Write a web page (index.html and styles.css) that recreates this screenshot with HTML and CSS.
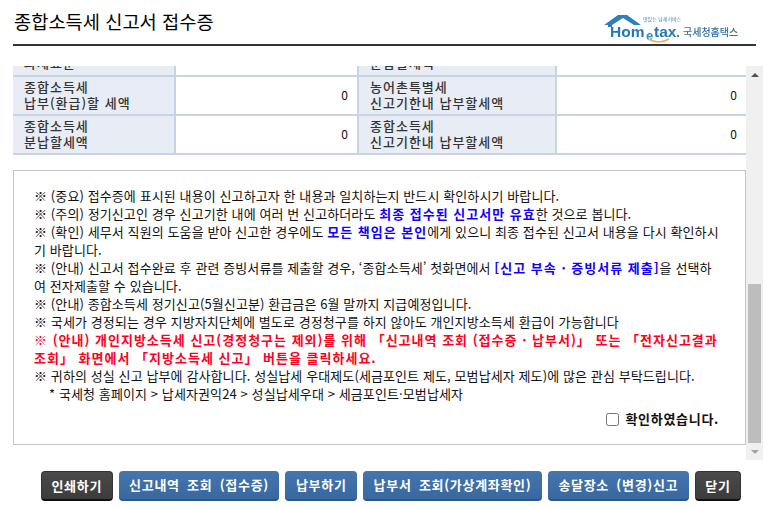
FILE: index.html
```html
<!DOCTYPE html>
<html lang="ko">
  <head>
    <meta charset="utf-8">
    <title>종합소득세 신고서 접수증</title>
    <link rel="stylesheet" href="styles.css">
  </head>
  <body>
    <div class="header">
      <h1 class="title">종합소득세 신고서 접수증</h1>
      <svg class="logo" width="142" height="32" viewBox="0 0 142 32">
        <path d="M1 13 L15 3 H24 L38 13 H31 L20 6 L9 13 V15 H5 V13 Z" fill="#2f7fb8"/>
        <text x="40" y="9" class="logo-tiny">맛있는 납세서비스</text>
        <text x="7" y="25" class="logo-home">Hom</text>
        <text x="43" y="28" class="logo-e">e</text>
        <text x="51" y="25" class="logo-home">tax</text>
        <circle cx="75" cy="24" r="1.2" fill="#3a9a4a"/>
        <path d="M45 27 Q56 33 66 27" stroke="#eab05a" stroke-width="1.5" fill="none"/>
        <text x="80" y="24" class="logo-kr">국세청홈택스</text>
      </svg>
    </div>

    <div class="scroll-area">
      <div class="scroll-content">
        <table class="tax-table">
          <tr>
            <th>종합소득세<br>과세표준</th>
            <td></td>
            <th>종합소득세<br>분납할세액</th>
            <td></td>
          </tr>
          <tr>
            <th>종합소득세<br>납부(환급)할 세액</th>
            <td>0</td>
            <th>농어촌특별세<br>신고기한내 납부할세액</th>
            <td>0</td>
          </tr>
          <tr>
            <th>종합소득세<br>분납할세액</th>
            <td>0</td>
            <th>종합소득세<br>신고기한내 납부할세액</th>
            <td>0</td>
          </tr>
        </table>
        <div class="notice">
          <p>※ (중요) 접수증에 표시된 내용이 신고하고자 한 내용과 일치하는지 반드시 확인하시기 바랍니다.</p>
          <p>※ (주의) 정기신고인 경우 신고기한 내에 여러 번 신고하더라도 <b class="blue">최종 접수된 신고서만 유효</b>한 것으로 봅니다.</p>
          <p>※ (확인) 세무서 직원의 도움을 받아 신고한 경우에도 <b class="blue">모든 책임은 본인</b>에게 있으니 최종 접수된 신고서 내용을 다시 확인하시<br>기 바랍니다.</p>
          <p>※ (안내) 신고서 접수완료 후 관련 증빙서류를 제출할 경우, ‘종합소득세’ 첫화면에서 <b class="blue">[신고 부속 · 증빙서류 제출]</b>을 선택하<br>여 전자제출할 수 있습니다.</p>
          <p>※ (안내) 종합소득세 정기신고(5월신고분) 환급금은 6월 말까지 지급예정입니다.</p>
          <p>※ 국세가 경정되는 경우 지방자치단체에 별도로 경정청구를 하지 않아도 개인지방소득세 환급이 가능합니다</p>
          <p class="red">※ (안내) 개인지방소득세 신고(경정청구는 제외)를 위해 「신고내역 조회 (접수증 · 납부서)」 또는 「전자신고결과<br>조회」 화면에서 「지방소득세 신고」 버튼을 클릭하세요.</p>
          <p>※ 귀하의 성실 신고 납부에 감사합니다. 성실납세 우대제도(세금포인트 제도, 모범납세자 제도)에 많은 관심 부탁드립니다.</p>
          <p class="sub">* 국세청 홈페이지 &gt; 납세자권익24 &gt; 성실납세우대 &gt; 세금포인트·모범납세자</p>
          <label class="confirm"><input type="checkbox"> <b>확인하였습니다.</b></label>
        </div>
      </div>
      <div class="scrollbar">
        <span class="arrow arrow-up"></span>
        <span class="track"><span class="thumb"></span></span>
        <span class="arrow arrow-down"></span>
      </div>
    </div>

    <div class="buttons">
      <button class="btn btn-dark">인쇄하기</button>
      <button class="btn">신고내역 조회 (접수증)</button>
      <button class="btn">납부하기</button>
      <button class="btn">납부서 조회(가상계좌확인)</button>
      <button class="btn">송달장소 (변경)신고</button>
      <button class="btn btn-dark">닫기</button>
    </div>
  </body>
</html>
```

FILE: styles.css
```css
* {
  box-sizing: border-box;
}
body {
  margin: 0;
  padding: 0 8px 0 13px;
  font-family: "Noto Sans CJK KR", "Liberation Sans", sans-serif;
  font-size: 13px;
  color: #111;
  background: #fff;
}
.header {
  display: flex;
  justify-content: space-between;
  align-items: flex-end;
  height: 46px;
  width: 743px;
  padding: 0 11px 0 1px;
  border-bottom: 2px solid #333;
}
.title {
  margin: 0 0 11px;
  font-size: 18.7px;
  font-weight: 400;
  line-height: 24px;
  color: #000;
}
.logo {
  filter: blur(0.35px);
}
.logo-home {
  font-family: "Liberation Sans", sans-serif;
  font-size: 15.5px;
  font-weight: 700;
  fill: #2478b5;
}
.logo-e {
  font-family: "Liberation Sans", sans-serif;
  font-size: 13px;
  font-weight: 700;
  fill: #2f8fc8;
}
.logo-tiny {
  font-size: 5px;
  fill: #4a86b8;
}
.logo-kr {
  font-size: 10px;
  font-weight: 500;
  fill: #2a6fa8;
}

.scroll-area {
  display: flex;
  height: 394px;
  margin-top: 20px;
  overflow: hidden;
}
.scroll-content {
  width: 733px;
  display: flex;
  flex-direction: column;
  justify-content: flex-end;
  padding-bottom: 15px;
}

.tax-table {
  flex: none;
  width: 733px;
  border-collapse: collapse;
  table-layout: fixed;
  margin-bottom: 15px;
}
.tax-table th,
.tax-table td {
  height: 39px;
  border-bottom: 2px solid #c8d3e3;
  line-height: 16px;
  padding: 1px 9px 3px 11px;
  font-weight: 400;
}
.tax-table th {
  background: #e8ecf5;
  border-right: 2px solid #c8d3e3;
  text-align: left;
  color: #333;
  font-weight: 500;
  letter-spacing: 1px;
  white-space: nowrap;
}
.tax-table th:nth-child(1) {
  width: 162px;
}
.tax-table td:nth-child(2) {
  width: 183px;
  border-right: 2px solid #c8d3e3;
}
.tax-table th:nth-child(3) {
  width: 198px;
}
.tax-table td {
  text-align: right;
  font-size: 12px;
}

.notice {
  flex: none;
  height: 275px;
  width: 733px;
  border: 1px solid #c4c4c4;
  padding: 16px 0 0 20px;
  white-space: nowrap;
  letter-spacing: 0.1px;
}
.notice p {
  margin: 0;
  line-height: 18px;
}
.blue {
  color: #1400ff;
  letter-spacing: 1px;
}
.red {
  color: #ff0022;
  font-weight: 700;
  letter-spacing: 1px;
}
.sub {
  padding-left: 15px;
}
.confirm {
  display: flex;
  align-items: center;
  justify-content: flex-end;
  gap: 6px;
  margin-top: 7px;
  padding-right: 26px;
  line-height: 18px;
  letter-spacing: 0.7px;
}
.confirm input {
  margin: 0;
  width: 13px;
  height: 13px;
}

.scrollbar {
  display: flex;
  flex-direction: column;
  width: 17px;
  background: #f0f0f0;
}
.arrow {
  flex: none;
  height: 17px;
  display: flex;
  align-items: center;
  justify-content: center;
}
.arrow-up::before {
  content: "";
  border: 4px solid transparent;
  border-top: 0;
  border-bottom: 4px solid #505050;
}
.arrow-down::before {
  content: "";
  border: 4px solid transparent;
  border-bottom: 0;
  border-top: 4px solid #a3a3a3;
}
.track {
  flex: 1;
  display: flex;
  flex-direction: column;
  justify-content: flex-end;
}
.thumb {
  height: 159px;
  margin: 0 2px;
  background: #bdbdbd;
}

.buttons {
  display: flex;
  justify-content: center;
  gap: 6px;
  margin-top: 11px;
  padding-left: 6px;
}
.btn {
  height: 30px;
  padding: 0 10.5px 1px;
  border: 0;
  border-bottom: 2px solid #2b5688;
  border-radius: 4px;
  background: linear-gradient(#4475ac, #38689f);
  color: #fff;
  font-family: inherit;
  font-size: 13px;
  font-weight: 700;
  letter-spacing: 0.7px;
  word-spacing: 3px;
  white-space: nowrap;
}
.btn-dark {
  padding: 0 9.5px 1px;
  background: linear-gradient(#4a4a4a, #3c3c3c);
  border: 1px solid #333;
  border-bottom: 2px solid #111;
}
```
